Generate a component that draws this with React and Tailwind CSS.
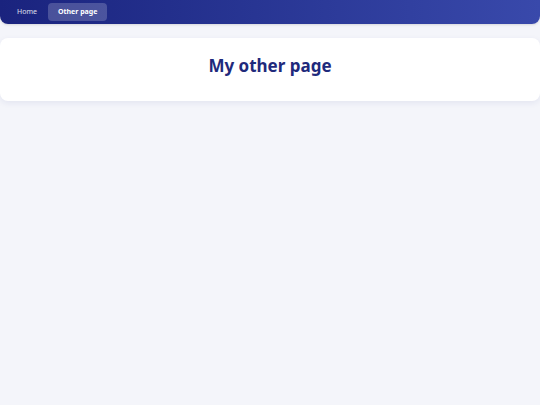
import React from "react";

const App = () => {
  return (
    <div className="min-h-screen bg-[#f4f5fa] font-['Noto_Sans',sans-serif]">
      {/* Nav */}
      <nav className="flex items-center gap-px h-6 px-[7px] rounded-b-lg bg-gradient-to-r from-[#1a237e] to-[#3949ab] shadow-sm">
        <a href="#" className="px-2.5 py-1 rounded text-[7px] leading-[10px] text-white/85">
          Home
        </a>
        <a href="#" className="px-2.5 py-1 rounded bg-white/20 text-[7px] leading-[10px] font-bold text-white">
          Other page
        </a>
      </nav>

      {/* Content */}
      <main className="mt-3.5">
        <div className="bg-white rounded-lg shadow-[0_2px_6px_rgba(26,35,126,0.08)] pt-4 pb-[23px] text-center">
          <h1 className="text-[17px] leading-6 font-bold text-[#1f2a7c]">My other page</h1>
        </div>
      </main>
    </div>
  );
};

export default App;
